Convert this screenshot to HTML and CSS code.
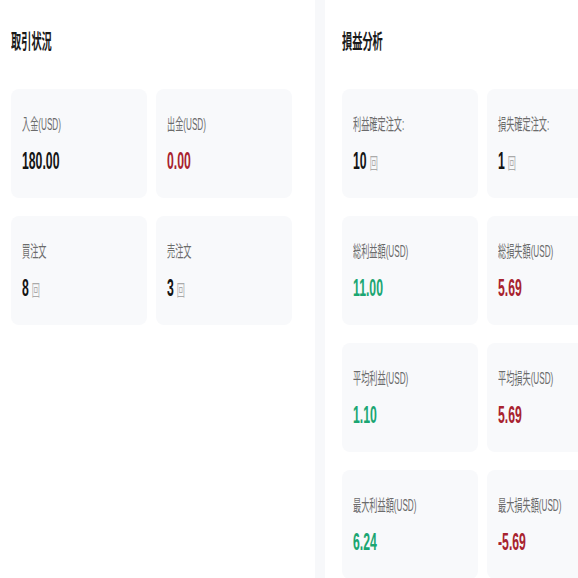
FILE: index.html
```html
<!DOCTYPE html>
<html lang="ja">
<head>
    <meta charset="UTF-8">
    <meta name="viewport" content="width=device-width, initial-scale=1.0">
    <title>取引レポート</title>
    <link rel="stylesheet" href="styles.css">
</head>
<body>
    <div class="page">
        <section class="panel panel-left">
            <h2 class="title"><span class="sq">取引状況</span></h2>
            <div class="cards">
                <div class="card">
                    <div class="label"><span class="sq">入金(USD)</span></div>
                    <div class="value"><span class="sq">180.00</span></div>
                </div>
                <div class="card">
                    <div class="label"><span class="sq">出金(USD)</span></div>
                    <div class="value loss"><span class="sq">0.00</span></div>
                </div>
                <div class="card">
                    <div class="label"><span class="sq">買注文</span></div>
                    <div class="value"><span class="sq">8<span class="unit">回</span></span></div>
                </div>
                <div class="card">
                    <div class="label"><span class="sq">売注文</span></div>
                    <div class="value"><span class="sq">3<span class="unit">回</span></span></div>
                </div>
            </div>
        </section>

        <div class="divider"></div>

        <section class="panel panel-right">
            <h2 class="title"><span class="sq">損益分析</span></h2>
            <div class="cards">
                <div class="card">
                    <div class="label"><span class="sq">利益確定注文:</span></div>
                    <div class="value"><span class="sq">10<span class="unit">回</span></span></div>
                </div>
                <div class="card">
                    <div class="label"><span class="sq">損失確定注文:</span></div>
                    <div class="value"><span class="sq">1<span class="unit">回</span></span></div>
                </div>
                <div class="card">
                    <div class="label"><span class="sq">総利益額(USD)</span></div>
                    <div class="value profit"><span class="sq">11.00</span></div>
                </div>
                <div class="card">
                    <div class="label"><span class="sq">総損失額(USD)</span></div>
                    <div class="value loss"><span class="sq">5.69</span></div>
                </div>
                <div class="card">
                    <div class="label"><span class="sq">平均利益(USD)</span></div>
                    <div class="value profit"><span class="sq">1.10</span></div>
                </div>
                <div class="card">
                    <div class="label"><span class="sq">平均損失(USD)</span></div>
                    <div class="value loss"><span class="sq">5.69</span></div>
                </div>
                <div class="card">
                    <div class="label"><span class="sq">最大利益額(USD)</span></div>
                    <div class="value profit"><span class="sq">6.24</span></div>
                </div>
                <div class="card">
                    <div class="label"><span class="sq">最大損失額(USD)</span></div>
                    <div class="value loss"><span class="sq">-5.69</span></div>
                </div>
            </div>
        </section>
    </div>
</body>
</html>
```

FILE: styles.css
```css
html, body {
    margin: 0;
    background: #ffffff;
}

body {
    font-family: "Liberation Sans", "Noto Sans CJK JP", sans-serif;
    color: #1f1f1f;
}

.page {
    display: flex;
    width: 578px;
    height: 578px;
    overflow: hidden;
}

.panel {
    flex: none;
    padding-top: 30px;
    background: #ffffff;
}

.panel-left {
    width: 304px;
    padding-left: 11px;
}

.panel-right {
    width: 300px;
    padding-left: 17px;
}

.divider {
    flex: none;
    width: 10px;
    background: #f7f8fa;
}

/* text in this report is drawn narrow */
.sq {
    display: inline-block;
    white-space: nowrap;
    transform: scaleX(0.51);
    transform-origin: 0 50%;
}

.title {
    margin: 0 0 35px;
    font-size: 20px;
    line-height: 24px;
    font-weight: bold;
    color: #1a1a1a;
}

.cards {
    display: grid;
    grid-template-columns: repeat(2, 136px);
    column-gap: 9px;
    row-gap: 18px;
}

.card {
    height: 109px;
    box-sizing: border-box;
    padding: 26px 11px 0;
    background: #f8f9fb;
    border-radius: 8px;
}

.label {
    font-size: 16px;
    line-height: 20px;
    color: #6b6b6b;
}

.value {
    margin-top: 12px;
    font-size: 24px;
    line-height: 28px;
    font-weight: bold;
    color: #141414;
}

.unit {
    margin-left: 6px;
    font-size: 16px;
    font-weight: normal;
    color: #aaaaaa;
}

.profit {
    color: #1ba672;
}

.loss {
    color: #a8232f;
}
```
